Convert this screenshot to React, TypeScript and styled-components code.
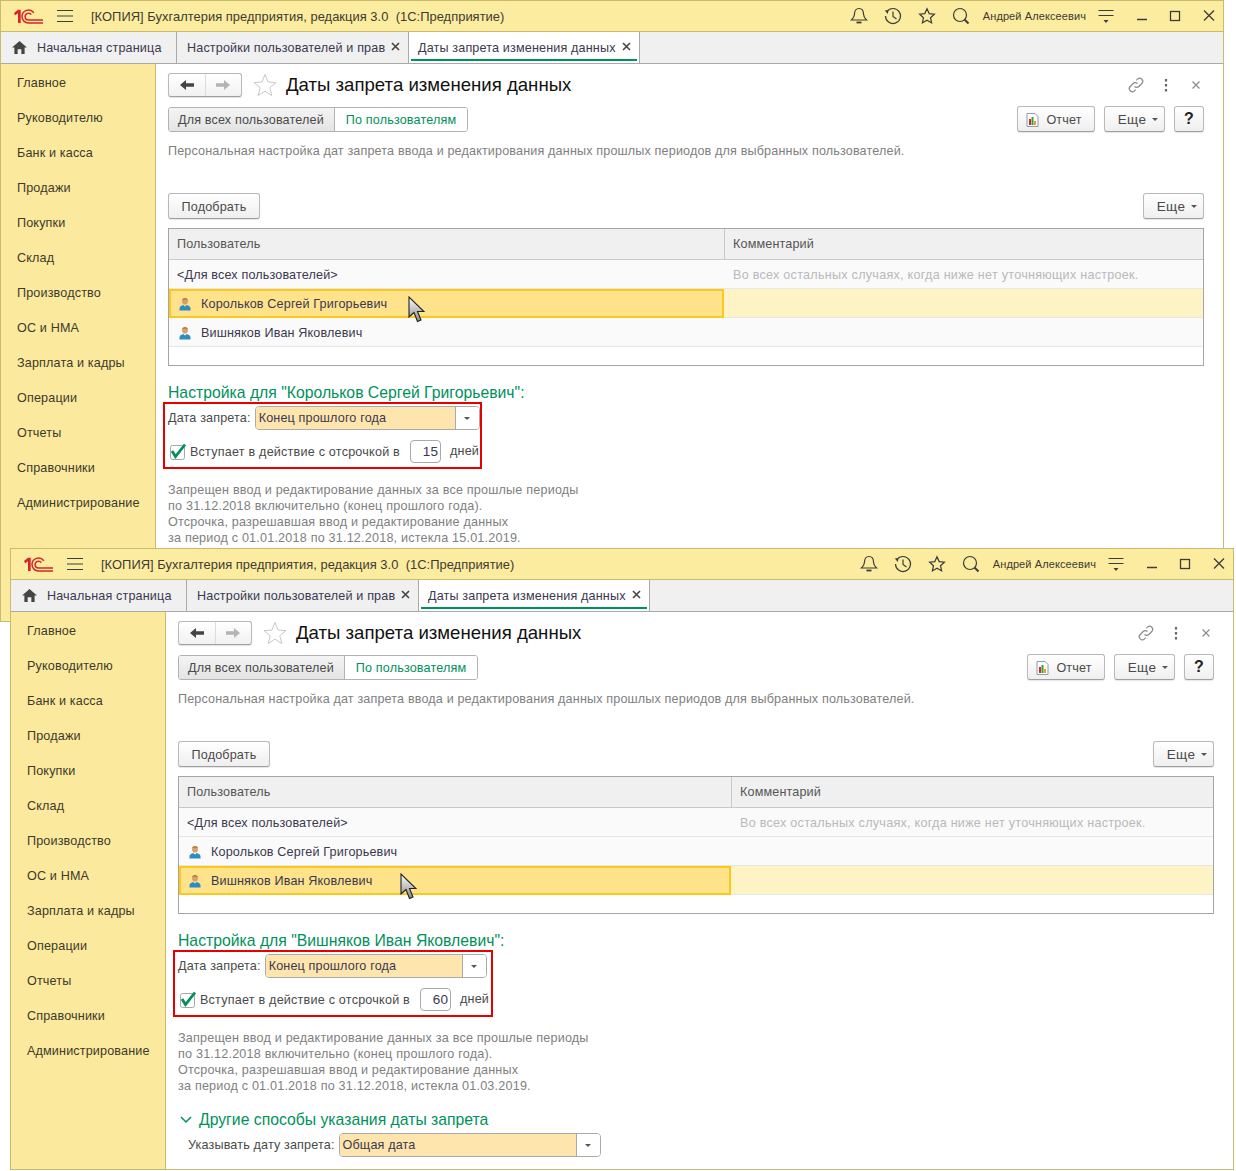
import React from "react";
import styled, { createGlobalStyle } from "styled-components";

const Global = createGlobalStyle`
  html, body { margin: 0; padding: 0; background: #fff; }
  body { font-family: "Liberation Sans", Arial, sans-serif; }
  #root { position: relative; width: 1236px; height: 1171px; overflow: hidden; }
`;

const Frame = styled.div<{ $x: number; $y: number }>`
  position: absolute;
  left: ${(p) => p.$x}px;
  top: ${(p) => p.$y}px;
  width: 1224px;
  height: 622px;
  box-sizing: border-box;
  border: 1px solid #c9ba6e;
  background: #fff;
  display: flex;
  flex-direction: column;
  overflow: hidden;
  font-size: 12.6px;
  letter-spacing: 0.15px;
  color: #404040;
`;

const TitleBar = styled.div`
  height: 31px;
  box-sizing: border-box;
  flex: none;
  display: flex;
  align-items: center;
  background: #fbec9f;
  border-bottom: 1px solid #c9ba6e;
  color: #3f3a33;
`;
const Logo = styled.svg`
  margin-left: 13px;
  width: 29px;
  height: 15px;
  flex: none;
`;
const Burger = styled.svg`
  margin-left: 14px;
  width: 16px;
  height: 14px;
  flex: none;
`;
const AppTitle = styled.div`
  margin-left: 18px;
  white-space: pre;
  font-size: 12.9px;
  letter-spacing: 0.04px;
  flex: 1;
`;
const TitleIcon = styled.svg<{ $gap?: number; $end?: number }>`
  width: 18px;
  height: 18px;
  flex: none;
  margin-left: ${(p) => p.$gap ?? 16}px;
  margin-right: ${(p) => p.$end ?? 0}px;
  fill: none;
  stroke: #3c3c3c;
  stroke-width: 1.2;
`;
const UserName = styled.span`
  margin-left: 13px;
  font-size: 11px;
  letter-spacing: 0.1px;
  white-space: nowrap;
`;

const TabBar = styled.div`
  height: 32px;
  flex: none;
  display: flex;
  background: #f0f0f0;
  border-bottom: 1px solid #a9a9a9;
  box-sizing: border-box;
`;
const Tab = styled.div<{ $w: number; $active?: boolean }>`
  width: ${(p) => p.$w}px;
  flex: none;
  box-sizing: border-box;
  position: relative;
  display: flex;
  align-items: center;
  padding-left: ${(p) => (p.$active ? 9 : 10)}px;
  white-space: nowrap;
  border-right: 1px solid #a9a9a9;
  color: #3b3850;
  background: ${(p) => (p.$active ? "#fff" : "transparent")};
  ${(p) =>
    p.$active
      ? `&::after { content: ""; position: absolute; left: 2px; right: 2px; bottom: 2px; height: 2px; background: #00915a; }`
      : ""}
`;
const HomeIcon = styled.svg`
  width: 15px;
  height: 13px;
  margin: 0 10px 0 1px;
  flex: none;
`;
const TabClose = styled.span`
  position: absolute;
  right: 8px;
  top: 50%;
  margin-top: -6px;
  width: 9px;
  height: 9px;
  display: flex;
`;

const Body = styled.div`
  flex: 1;
  min-height: 0;
  display: flex;
`;
const Sidebar = styled.nav`
  width: 155px;
  flex: none;
  box-sizing: border-box;
  background: #fbe99d;
  border-right: 1px solid #c9ba6e;
  padding-top: 1px;
`;
const NavItem = styled.div`
  height: 35px;
  display: flex;
  align-items: center;
  padding-left: 16px;
  color: #3d3a2c;
  white-space: nowrap;
`;

const Content = styled.main`
  flex: 1;
  min-width: 0;
  padding: 9px 19px 0 12px;
  display: flex;
  flex-direction: column;
`;
const HeadRow = styled.div`
  height: 24px;
  display: flex;
  align-items: center;
  flex: none;
`;
const NavGroup = styled.div`
  width: 74px;
  height: 24px;
  flex: none;
  box-sizing: border-box;
  display: flex;
  border: 1px solid #b9b9b9;
  border-bottom-color: #a0a0a0;
  border-radius: 3px;
  background: linear-gradient(#fff, #f1f1f1);
  box-shadow: 0 1px 1px rgba(0, 0, 0, 0.12);
`;
const NavArrow = styled.div<{ $first?: boolean }>`
  flex: 1;
  display: flex;
  align-items: center;
  justify-content: center;
  ${(p) => (p.$first ? "border-right: 1px solid #dcdcdc;" : "")}
`;
const StarIcon = styled.svg`
  width: 24px;
  height: 24px;
  margin-left: 11px;
  flex: none;
`;
const PageTitle = styled.h1`
  margin: 0 0 0 9px;
  font-size: 18.6px;
  font-weight: 400;
  letter-spacing: 0;
  color: #111;
  flex: 1;
  white-space: nowrap;
`;
const HeadTool = styled.svg<{ $gap: number; $end?: number }>`
  width: 18px;
  height: 18px;
  flex: none;
  margin-left: ${(p) => p.$gap}px;
  margin-right: ${(p) => p.$end ?? 0}px;
  fill: none;
  stroke: #8c8c8c;
  stroke-width: 1.2;
`;

const ToolRow = styled.div<{ $mt: number }>`
  margin-top: ${(p) => p.$mt}px;
  height: 26px;
  flex: none;
  display: flex;
  align-items: center;
  gap: 9px;
`;
const Segments = styled.div`
  display: flex;
  height: 25px;
  margin-right: auto;
  box-sizing: border-box;
  border: 1px solid #b2b2b2;
  border-radius: 3px;
  overflow: hidden;
`;
const Segment = styled.div<{ $on?: boolean }>`
  display: flex;
  align-items: center;
  padding: 1px ${(p) => (p.$on ? 11 : 10)}px 0 ${(p) => (p.$on ? 11 : 9)}px;
  white-space: nowrap;
  color: ${(p) => (p.$on ? "#00915a" : "#4a4a4a")};
  background: ${(p) => (p.$on ? "#fff" : "linear-gradient(#f4f4f4, #e4e4e4)")};
  ${(p) => (p.$on ? "border-left: 1px solid #b2b2b2;" : "")}
`;
const Button = styled.div<{ $w: number; $bold?: boolean; $pr?: number }>`
  width: ${(p) => p.$w}px;
  height: 26px;
  box-sizing: border-box;
  flex: none;
  display: flex;
  align-items: center;
  justify-content: center;
  padding-top: ${(p) => (p.$bold ? 0 : 1)}px;
  padding-right: ${(p) => p.$pr ?? 0}px;
  gap: 6px;
  border: 1px solid #b9b9b9;
  border-bottom-color: #9f9f9f;
  border-radius: 3px;
  background: linear-gradient(#fff, #efefef);
  box-shadow: 0 1px 1px rgba(0, 0, 0, 0.1);
  color: #4a4a4a;
  white-space: nowrap;
  ${(p) => (p.$bold ? "font-size: 16px; font-weight: 700; color: #222;" : "")}
`;
const MoreButton = styled(Button)`
  font-size: 13.5px;
  letter-spacing: 0.4px;
  padding-left: 7px;
  padding-top: 0;
`;
const Spacer = styled.div`
  flex: 1;
`;
const Caret = styled.span`
  width: 0;
  height: 0;
  flex: none;
  border-left: 3px solid transparent;
  border-right: 3px solid transparent;
  border-top: 3px solid #555;
  margin-top: 1px;
`;
const ReportIcon = styled.svg`
  width: 13px;
  height: 14px;
  margin-right: 1px;
  flex: none;
`;
const Description = styled.div`
  margin-top: 11px;
  line-height: 16px;
  height: 16px;
  flex: none;
  color: #808080;
  white-space: nowrap;
`;

const Table = styled.div<{ $col: number }>`
  margin-top: 9px;
  height: 138px;
  flex: none;
  box-sizing: border-box;
  border: 1px solid #a5a5a5;
  display: grid;
  grid-template-columns: ${(p) => p.$col}px 1fr;
  grid-template-rows: 31px 29px 29px 29px 1fr;
`;
const HeadCell = styled.div<{ $first?: boolean }>`
  display: flex;
  align-items: center;
  padding-left: 8px;
  background: #f0f0f0;
  color: #555;
  border-bottom: 1px solid #c9c9c9;
  ${(p) => (p.$first ? "border-right: 1px solid #c9c9c9;" : "")}
`;
const Cell = styled.div<{ $sel?: boolean; $tail?: boolean; $muted?: boolean }>`
  position: relative;
  display: flex;
  align-items: center;
  padding: ${(p) => (p.$sel ? "0 0 0 6px" : "2px 0 0 8px")};
  box-sizing: border-box;
  white-space: nowrap;
  color: ${(p) => (p.$muted ? "#b9b9b9" : "#3b3850")};
  letter-spacing: ${(p) => (p.$muted ? 0.26 : 0.15)}px;
  background: ${(p) => (p.$sel ? "#fee38b" : p.$tail ? "#fdf3c4" : "#fafafa")};
  ${(p) => (p.$sel ? "border: 2px solid #fbc91e; margin-right: 1px;" : "border-bottom: 1px solid #e6e6e6;")}
  ${(p) => (p.$tail ? "margin-left: -1px;" : "")}
`;
const PersonIcon = styled.svg`
  width: 14px;
  height: 14px;
  margin-right: 9px;
  margin-left: 1px;
  flex: none;
`;
const Cursor = styled.svg<{ $x: number }>`
  position: absolute;
  left: ${(p) => p.$x}px;
  top: 5px;
  width: 17px;
  height: 27px;
  z-index: 2;
`;

const GreenHeading = styled.div`
  margin-top: 17px;
  height: 19px;
  line-height: 19px;
  flex: none;
  font-size: 15.75px;
  letter-spacing: 0;
  color: #00915a;
  white-space: nowrap;
`;
const RedBox = styled.div<{ $w: number }>`
  margin-left: -5px;
  width: ${(p) => p.$w}px;
  height: 67px;
  flex: none;
  box-sizing: border-box;
  border: 2px solid #e60000;
  padding: 2px 0 0 3px;
  display: flex;
  flex-direction: column;
`;
const FormRow = styled.div<{ $mt?: number }>`
  display: flex;
  align-items: center;
  margin-top: ${(p) => p.$mt ?? 0}px;
  white-space: nowrap;
`;
const Label = styled.span`
  color: #4a4a4a;
  padding-bottom: 1px;
`;
const Select = styled.div<{ $w: number; $ml: number }>`
  width: ${(p) => p.$w}px;
  height: 24px;
  margin-left: ${(p) => p.$ml}px;
  box-sizing: border-box;
  flex: none;
  display: flex;
  border: 1px solid #aaa;
  border-radius: 4px;
  overflow: hidden;
`;
const SelectValue = styled.div`
  flex: 1;
  background: #fee5ae;
  padding: 0 0 1px 3px;
  display: flex;
  align-items: center;
  color: #3b3850;
`;
const SelectDrop = styled.div`
  width: 23px;
  flex: none;
  border-left: 1px solid #aaa;
  background: #fff;
  display: flex;
  align-items: center;
  justify-content: center;
`;
const Check = styled.svg`
  width: 18px;
  height: 18px;
  flex: none;
  margin-left: 1px;
`;
const CheckText = styled.span`
  margin-left: 3px;
  color: #4a4a4a;
  letter-spacing: 0.21px;
`;
const NumberBox = styled.div`
  width: 31px;
  height: 23px;
  margin-right: 9px;
  margin-left: auto;
  box-sizing: border-box;
  border: 1px solid #aaa;
  border-radius: 4px;
  display: flex;
  align-items: center;
  justify-content: flex-end;
  padding-right: 2px;
  flex: none;
  font-size: 13.5px;
  color: #3b3850;
`;
const CheckRow = styled(FormRow)`
  width: 311px;
`;
const Notes = styled.div`
  margin-top: 13px;
  line-height: 16px;
  color: #808080;
  letter-spacing: 0.2px;
  flex: none;
  white-space: nowrap;
`;
const GroupHead = styled(GreenHeading)`
  margin-top: 16px;
  height: 20px;
  line-height: 20px;
  display: flex;
  align-items: center;
  gap: 7px;
  margin-left: 2px;
`;
const Chevron = styled.svg`
  width: 12px;
  height: 8px;
  flex: none;
`;
const BottomRow = styled(FormRow)`
  margin: 3px 0 0 10px;
`;

const MENU = ["Главное", "Руководителю", "Банк и касса", "Продажи", "Покупки", "Склад", "Производство", "ОС и НМА", "Зарплата и кадры", "Операции", "Отчеты", "Справочники", "Администрирование"];

const Cross = ({ c = "#444", w = 1.6 }: { c?: string; w?: number }) => (
  <svg width="9" height="9" viewBox="0 0 9 9"><path d="M1 1l7 7M8 1L1 8" stroke={c} strokeWidth={w} fill="none" /></svg>
);
const Person = () => (
  <PersonIcon viewBox="0 0 14 14">
    <ellipse cx="7" cy="4.2" rx="2.9" ry="3.4" fill="#d9a067" />
    <path d="M4 3.2C4.5 .8 9.5 .8 10 3.2 8.5 2.4 5.5 2.4 4 3.2z" fill="#a3723c" />
    <path d="M1.5 13.5v-2.2C1.5 9.2 4 8.4 5.2 8L7 9.4 8.8 8c1.2.4 3.7 1.2 3.7 3.3v2.2z" fill="#2e8cc4" />
  </PersonIcon>
);
const Arrow = ({ dir, c }: { dir: 1 | -1; c: string }) => (
  <svg width="14" height="10" viewBox="0 0 14 10" style={dir === 1 ? { transform: "scaleX(-1)" } : undefined}>
    <path d="M0 5l6-5v3.3h8v3.4H6V10z" fill={c} />
  </svg>
);

type WinProps = { x: number; y: number; sel: number; col: number; cursorX: number; name: string; days: string; until: string; selectW: number; boxW: number; other?: boolean };

function AppWindow({ x, y, sel, col, cursorX, name, days, until, selectW, boxW, other }: WinProps) {
  const users = ["Корольков Сергей Григорьевич", "Вишняков Иван Яковлевич"];
  return (
    <Frame $x={x} $y={y}>
      <TitleBar>
        <Logo viewBox="0 0 29 15">
          <path d="M0 4 4 .8h2.700V14H4V4.300L1.200 6.300z" fill="#d8232a" />
          <g fill="none" stroke="#d8232a" strokeWidth="1.500">
            <path d="M19.800 3.800A6.500 6.500 0 0 0 8 7.500 6.500 6.500 0 0 0 14.500 14H29" />
            <path d="M17.300 5.700A3.400 3.400 0 0 0 11.100 7.500 3.500 3.500 0 0 0 14.500 11H29" />
          </g>
        </Logo>
        <Burger viewBox="0 0 16 14"><path d="M0 1.500h16M0 7h16M0 12.500h16" stroke="#3d3d3d" strokeWidth="1.200" /></Burger>
        <AppTitle>[КОПИЯ] Бухгалтерия предприятия, редакция 3.0  (1С:Предприятие)</AppTitle>
        <TitleIcon viewBox="0 0 18 18">
          <path d="M9 1.500c-3 0-4.500 2.500-4.500 5.500 0 3-1.500 4.500-3 6h15c-1.500-1.500-3-3-3-6 0-3-1.500-5.500-4.500-5.500z" />
          <path d="M6.500 15.500h5" strokeWidth="1.800" />
        </TitleIcon>
        <TitleIcon viewBox="0 0 18 18" $gap={16}>
          <path d="M3 4.500A7.500 7.500 0 1 1 1.500 9" />
          <path d="M9 4.500V9.500l3.500 2.500" />
          <path d="M.8 3.500 4.500 3 3.800 7z" fill="#3c3c3c" stroke="none" />
        </TitleIcon>
        <TitleIcon viewBox="0 0 18 18" $gap={16}>
          <path d="M9 1.800l2.200 4.800 5.200.6-3.900 3.500 1.100 5.200L9 13.300l-4.600 2.600 1.100-5.200L1.600 7.200l5.200-.6z" />
        </TitleIcon>
        <TitleIcon viewBox="0 0 18 18" $gap={16}>
          <circle cx="8" cy="8" r="6.500" />
          <path d="M12.500 12.500l4 4" strokeWidth="2" />
        </TitleIcon>
        <UserName>Андрей Алексеевич</UserName>
        <TitleIcon viewBox="0 0 18 18" $gap={11}>
          <path d="M1.500 3.500h15M1.500 8.500h15" />
          <path d="M6.500 13h5L9 16z" fill="#3c3c3c" stroke="none" />
        </TitleIcon>
        <TitleIcon viewBox="0 0 18 18" $gap={21}>
          <path d="M1 12.500h10" strokeWidth="1.500" />
        </TitleIcon>
        <TitleIcon viewBox="0 0 18 18" $gap={14}>
          <rect x="2.500" y="4.500" width="9" height="9" strokeWidth="1.300" />
        </TitleIcon>
        <TitleIcon viewBox="0 0 18 18" $gap={15} $end={4}>
          <path d="M3 3.500l10 10M13 3.500l-10 10" strokeWidth="1.300" />
        </TitleIcon>
      </TitleBar>
      <TabBar>
        <Tab $w={176}>
          <HomeIcon viewBox="0 0 16 14"><path d="M8 0 16 7h-2.500v7H10V9H6v5H2.500V7H0z" fill="#444" /></HomeIcon>
          Начальная страница
        </Tab>
        <Tab $w={232}>
          Настройки пользователей и прав
          <TabClose><Cross /></TabClose>
        </Tab>
        <Tab $w={231} $active>
          Даты запрета изменения данных
          <TabClose><Cross /></TabClose>
        </Tab>
      </TabBar>
      <Body>
        <Sidebar>
          {MENU.map((m) => <NavItem key={m}>{m}</NavItem>)}
        </Sidebar>
        <Content>
          <HeadRow>
            <NavGroup>
              <NavArrow $first><Arrow dir={-1} c="#444" /></NavArrow>
              <NavArrow><Arrow dir={1} c="#b4b4b4" /></NavArrow>
            </NavGroup>
            <StarIcon viewBox="0 0 24 24">
              <path d="M12 1.500l3 7.500 8 .6-6.200 5.100 2 7.800L12 18.200l-6.800 4.300 2-7.800L1 9.600l8-.6z" fill="#fff" stroke="#c8c8c8" />
            </StarIcon>
            <PageTitle>Даты запрета изменения данных</PageTitle>
            <HeadTool viewBox="0 0 18 18" $gap={0}>
              <path d="M7.500 10.500a3 3 0 0 0 4.300 0l3-3a3 3 0 0 0-4.300-4.300l-1.200 1.200" />
              <path d="M10.500 7.500a3 3 0 0 0-4.300 0l-3 3a3 3 0 0 0 4.300 4.300l1.200-1.200" />
            </HeadTool>
            <HeadTool viewBox="0 0 18 18" $gap={12}>
              <path d="M9 3v2.500M9 8v2.500M9 13v2.500" stroke="#666" strokeWidth="2.200" />
            </HeadTool>
            <HeadTool viewBox="0 0 18 18" $gap={12} $end={-1}>
              <path d="M5.500 5.500l7 7M12.500 5.500l-7 7" />
            </HeadTool>
          </HeadRow>
          <ToolRow $mt={9}>
            <Segments>
              <Segment>Для всех пользователей</Segment>
              <Segment $on>По пользователям</Segment>
            </Segments>
            <Button $w={78} $pr={4}>
              <ReportIcon viewBox="0 0 13 14">
                <path d="M1 .5h8l3 3v10H1z" fill="#fff" stroke="#8f9bb0" />
                <path d="M3 6h2v6H3z" fill="#d8232a" />
                <path d="M5.500 4h2v8h-2z" fill="#3a9a3a" />
                <path d="M8 8h2v4H8z" fill="#e8a020" />
              </ReportIcon>
              Отчет
            </Button>
            <MoreButton $w={61}>Еще <Caret /></MoreButton>
            <Button $w={30} $bold>?</Button>
          </ToolRow>
          <Description>Персональная настройка дат запрета ввода и редактирования данных прошлых периодов для выбранных пользователей.</Description>
          <ToolRow $mt={34}>
            <Button $w={92}>Подобрать</Button>
            <Spacer />
            <MoreButton $w={61}>Еще <Caret /></MoreButton>
          </ToolRow>
          <Table $col={col}>
            <HeadCell $first>Пользователь</HeadCell>
            <HeadCell>Комментарий</HeadCell>
            <Cell>&lt;Для всех пользователей&gt;</Cell>
            <Cell $muted>Во всех остальных случаях, когда ниже нет уточняющих настроек.</Cell>
            {users.map((u, i) => (
              <React.Fragment key={u}>
                <Cell $sel={sel === i}>
                  <Person />
                  {u}
                  {sel === i && (
                    <Cursor $x={cursorX} viewBox="0 0 17 27">
                      <defs>
                        <linearGradient id="cursorFill" x1="0" y1="0" x2="0" y2="1">
                          <stop offset="0" stopColor="#ffffff" />
                          <stop offset="1" stopColor="#8a8a8a" />
                        </linearGradient>
                      </defs>
                      <path d="M1 1v20l5-4.500 3.500 9 3.500-1.500L9.500 15.500H16z" fill="url(#cursorFill)" stroke="#222" strokeWidth="1.100" />
                    </Cursor>
                  )}
                </Cell>
                <Cell $tail={sel === i} />
              </React.Fragment>
            ))}
          </Table>
          <GreenHeading>Настройка для "{name}":</GreenHeading>
          <RedBox $w={boxW}>
            <FormRow>
              <Label>Дата запрета:</Label>
              <Select $w={selectW} $ml={4}>
                <SelectValue>Конец прошлого года</SelectValue>
                <SelectDrop><Caret /></SelectDrop>
              </Select>
            </FormRow>
            <CheckRow $mt={10}>
              <Check viewBox="0 0 18 18">
                <rect x="1.500" y="2.500" width="14" height="14" rx="2" fill="#fff" stroke="#a8a8a8" />
                <path d="M3 8l3.500 5.500L16 1.500" fill="none" stroke="#00915a" strokeWidth="2.800" />
              </Check>
              <CheckText>Вступает в действие с отсрочкой в</CheckText>
              <NumberBox>{days}</NumberBox>
              <Label>дней</Label>
            </CheckRow>
          </RedBox>
          <Notes>
            Запрещен ввод и редактирование данных за все прошлые периоды<br />
            по 31.12.2018 включительно (конец прошлого года).<br />
            Отсрочка, разрешавшая ввод и редактирование данных<br />
            за период с 01.01.2018 по 31.12.2018, истекла {until}.
          </Notes>
          {other && (
            <>
              <GroupHead>
                <Chevron viewBox="0 0 12 8"><path d="M1 1l5 5 5-5" fill="none" stroke="#00915a" strokeWidth="1.500" /></Chevron>
                Другие способы указания даты запрета
              </GroupHead>
              <BottomRow>
                <Label>Указывать дату запрета:</Label>
                <Select $w={262} $ml={4}>
                  <SelectValue>Общая дата</SelectValue>
                  <SelectDrop><Caret /></SelectDrop>
                </Select>
              </BottomRow>
            </>
          )}
        </Content>
      </Body>
    </Frame>
  );
}

export default function App() {
  return (
    <>
      <Global />
      <AppWindow x={0} y={0} sel={0} col={556} cursorX={237} name="Корольков Сергей Григорьевич" days="15" until="15.01.2019" selectW={225} boxW={319} />
      <AppWindow x={10} y={548} sel={1} col={553} cursorX={219} name="Вишняков Иван Яковлевич" days="60" until="01.03.2019" selectW={222} boxW={320} other />
    </>
  );
}
